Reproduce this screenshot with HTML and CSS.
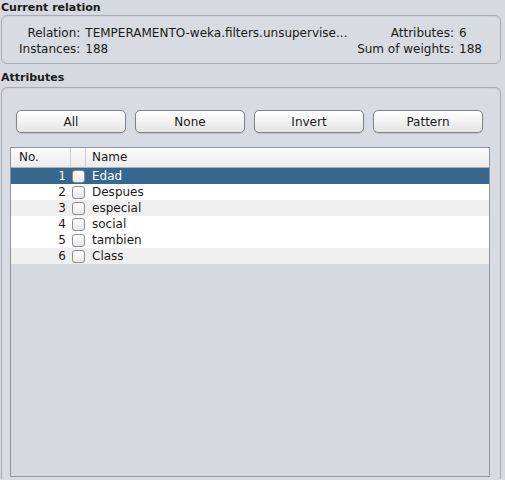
FILE: index.html
```html
<!DOCTYPE html>
<html>
<head>
<meta charset="utf-8">
<link rel="stylesheet" href="styles.css">
</head>
<body>
<div class="title">Current relation</div>
<div class="group info">
  <div class="info-left">
    <span class="lbl">Relation:</span><span class="val">TEMPERAMENTO-weka.filters.unsupervise...</span>
    <span class="lbl">Instances:</span><span class="val">188</span>
  </div>
  <div class="info-right">
    <span class="lbl">Attributes:</span><span class="val">6</span>
    <span class="lbl">Sum of weights:</span><span class="val">188</span>
  </div>
</div>
<div class="title title2">Attributes</div>
<div class="group attrs">
  <div class="buttons">
    <button class="btn">All</button>
    <button class="btn">None</button>
    <button class="btn">Invert</button>
    <button class="btn">Pattern</button>
  </div>
  <div class="table">
    <div class="row head">
      <div class="c-no">No.</div><div class="c-chk"></div><div class="c-name">Name</div>
    </div>
    <div class="row sel"><div class="c-no">1</div><div class="c-chk"><span class="box"></span></div><div class="c-name">Edad</div></div>
    <div class="row"><div class="c-no">2</div><div class="c-chk"><span class="box"></span></div><div class="c-name">Despues</div></div>
    <div class="row alt"><div class="c-no">3</div><div class="c-chk"><span class="box"></span></div><div class="c-name">especial</div></div>
    <div class="row"><div class="c-no">4</div><div class="c-chk"><span class="box"></span></div><div class="c-name">social</div></div>
    <div class="row"><div class="c-no">5</div><div class="c-chk"><span class="box"></span></div><div class="c-name">tambien</div></div>
    <div class="row alt"><div class="c-no">6</div><div class="c-chk"><span class="box"></span></div><div class="c-name">Class</div></div>
  </div>
</div>
</body>
</html>
```
FILE: styles.css
```css
html, body {
  margin: 0;
  padding: 0;
  background: #d6d9df;
  font-family: "DejaVu Sans", "Noto Sans", sans-serif;
  font-size: 12px;
  color: #1a1a1a;
  overflow: hidden;
  height: 480px;
}
.title {
  font-weight: bold;
  font-size: 11px;
  height: 15px;
  line-height: 15px;
  padding-left: 1px;
  white-space: nowrap;
}
.title2 {
  margin-top: 6px;
  height: 17px;
  line-height: 16px;
}
.group {
  margin-left: 1px;
  width: 498px;
  border: 1px solid #a9acb3;
  border-radius: 6px;
  background: #d8dbe1;
  box-shadow: inset 0 1px 2px rgba(0,0,0,0.06);
}
.info {
  display: flex;
  justify-content: space-between;
  padding-top: 9px;
  height: 38px;
  white-space: nowrap;
}
.info-left, .info-right {
  display: grid;
  grid-template-columns: auto auto;
  column-gap: 5px;
  line-height: 16px;
  align-content: start;
}
.lbl { text-align: right; }
.info-left { margin-left: 17px; }
.info-right { margin-right: 15px; grid-template-columns: auto 26px; }
.attrs {
  height: 391px;
  border-bottom: none;
  border-radius: 6px 6px 0 0;
}
.buttons {
  display: flex;
  gap: 9px;
  padding: 22px 0 0 14px;
}
.btn {
  width: 110px;
  height: 23px;
  border: 1px solid #808389;
  border-radius: 5px;
  background: linear-gradient(#ffffff, #f2f2f2 50%, #e4e4e4);
  font-family: "DejaVu Sans", "Noto Sans", sans-serif;
  font-size: 12px;
  color: #1a1a1a;
  padding: 0;
  box-shadow: 0 1px 1px rgba(0,0,0,0.12);
}
.table {
  margin: 14px 0 0 8px;
  width: 478px;
  height: 328px;
  border: 1px solid #90949b;
  background: #d6d9df;
}
.row {
  display: flex;
  height: 16px;
  line-height: 16px;
  background: #ffffff;
  white-space: nowrap;
}
.row.alt { background: #efefef; }
.row.sel { background: #36678f; color: #ffffff; }
.row.head {
  line-height: 19px;
  background: linear-gradient(#fbfbfb, #ececec);
  border-bottom: 1px solid #b2b2b2;
  box-sizing: border-box;
  height: 20px;
}
.c-no {
  width: 59px;
  padding-right: 4px;
  box-sizing: border-box;
  text-align: right;
}
.head .c-no {
  text-align: left;
  padding-left: 8px;
  border-right: 1px solid #cfcfcf;
  width: 60px;
}
.c-chk {
  width: 16px;
  display: flex;
  align-items: center;
  justify-content: center;
  box-sizing: border-box;
}
.head .c-chk {
  border-right: 1px solid #cfcfcf;
  width: 15px;
}
.c-name {
  padding-left: 6px;
}
.box {
  width: 13px;
  height: 13px;
  border: 1px solid #8e8e8e;
  border-radius: 3px;
  box-sizing: border-box;
  background: linear-gradient(#ffffff, #e9e9e9);
}
```
